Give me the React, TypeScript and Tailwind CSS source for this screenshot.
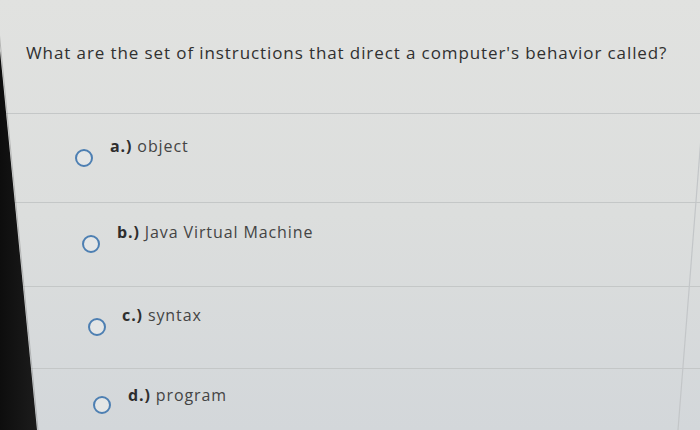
import React from "react";

const options = [
  { label: "a.)", text: "object", row: "h-[89px] pt-[22px]", pad: "pl-[75px]", gap: "gap-[17px]", circle: "mt-[13px]" },
  { label: "b.)", text: "Java Virtual Machine", row: "h-[84px] pt-[19px]", pad: "pl-[82px]", gap: "gap-[17px]", circle: "mt-[13px]" },
  { label: "c.)", text: "syntax", row: "h-[82px] pt-[18px]", pad: "pl-[88px]", gap: "gap-[16px]", circle: "mt-[13px]" },
  { label: "d.)", text: "program", row: "h-[62px] pt-[16px]", pad: "pl-[93px]", gap: "gap-[17px]", circle: "mt-[11px]" },
];

export default function App() {
  return (
    <div
      className="relative w-[700px] h-[430px] overflow-hidden bg-gradient-to-b from-[#e1e2e0] via-[#dcdedd] to-[#d3d7da] text-[#353535]"
      style={{ fontFamily: "'Open Sans', 'Noto Sans', sans-serif" }}
    >
      <div className="flex flex-col">
        <div className="h-[113px] pl-[26px] pt-[42px]">
          <p className="text-[17px] leading-[22px] font-medium text-[#303030] tracking-[0.9px]">
            What are the set of instructions that direct a computer's behavior called?
          </p>
        </div>
        {options.map((o) => (
          <div key={o.label} className={`border-t border-[#c4c7c7] ${o.row}`}>
            <div className={`flex items-start ${o.pad} ${o.gap}`}>
              <span className={`block w-[18px] h-[18px] rounded-full border-2 border-[#4d7fb2] bg-[#e4e6e6] ${o.circle} shrink-0`} />
              <p className="text-[16px] leading-[20px] text-[#444] tracking-[0.9px]">
                <span className="font-bold text-[#2e2e2e] mr-[5px]">{o.label}</span>
                {o.text}
              </p>
            </div>
          </div>
        ))}
      </div>
      <svg className="absolute inset-0 pointer-events-none" width="700" height="430" viewBox="0 0 700 430">
        <defs>
          <linearGradient id="edge" x1="0" y1="0" x2="1" y2="0">
            <stop offset="0" stopColor="#0c0c0c" />
            <stop offset="1" stopColor="#1c1c1c" />
          </linearGradient>
        </defs>
        <polygon points="-3,20 37,430 -3,430" fill="url(#edge)" />
        <line x1="38" y1="430" x2="-2" y2="20" stroke="#6b6b6b" strokeWidth="1" opacity="0.35" />
        <line x1="702" y1="125" x2="678" y2="430" stroke="#c3c6c8" strokeWidth="1.2" />
      </svg>
    </div>
  );
}
